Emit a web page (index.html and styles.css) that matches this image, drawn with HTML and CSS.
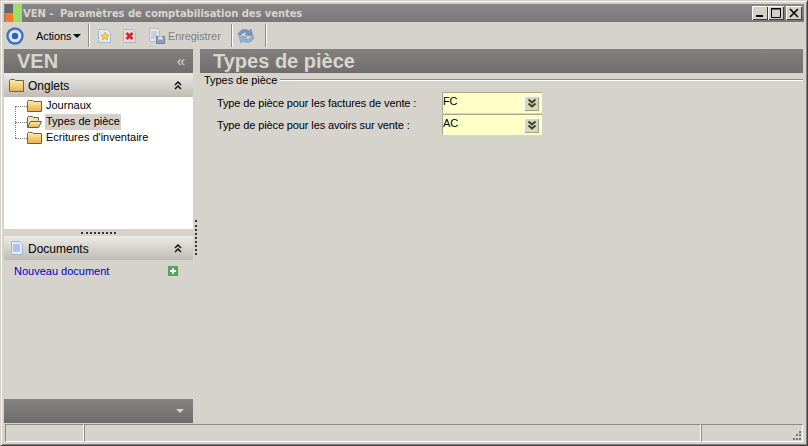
FILE: index.html
```html
<!DOCTYPE html>
<html lang="fr">
<head>
<meta charset="utf-8">
<title>VEN - Paramètres de comptabilisation des ventes</title>
<link rel="stylesheet" href="styles.css">
</head>
<body>
<div class="window">
  <header class="titlebar">
    <svg class="logo" width="18" height="18" viewBox="0 0 18 18"><defs><linearGradient id="fold" x1="0" y1="0" x2="0" y2="1"><stop offset="0" stop-color="#fbeeb4"/><stop offset="1" stop-color="#e9b143"/></linearGradient></defs><rect x="1" width="8" height="9" fill="#666"/><rect x="1" y="9" width="8" height="9" fill="#ee7b30"/><rect x="9" width="9" height="18" fill="#9fdc6a"/></svg>
    <span class="title">VEN -&nbsp; Paramètres de comptabilisation des ventes</span>
    <div class="winbtns">
      <span class="winbtn"><svg width="14" height="12" viewBox="0 0 14 12"><rect x="3" y="8" width="7" height="2" fill="#000"/></svg></span>
      <span class="winbtn"><svg width="14" height="12" viewBox="0 0 14 12"><path d="M2.500 1.500h9v9h-9z M2 2h10" fill="none" stroke="#000"/></svg></span>
      <span class="winbtn close"><svg width="14" height="12" viewBox="0 0 14 12"><path d="M3 2l8 8M11 2l-8 8" stroke="#000" stroke-width="1.600"/></svg></span>
    </div>
  </header>
  <nav class="toolbar">
    <svg class="tb-home" width="20" height="20" viewBox="0 0 20 20"><circle cx="10" cy="10" r="7.500" fill="#dfe6f3" stroke="#3f70c4" stroke-width="2.400"/><circle cx="10" cy="10" r="3.200" fill="#2f62bd"/></svg>
    <span class="actions">Actions<i class="caret"></i></span>
    <span class="sep"></span>
    <svg class="tb-icon" width="16" height="16" viewBox="0 0 16 16"><path d="M1.500 1.500h9l3 3v10h-12z" fill="#dfe9f8" stroke="#a9b8d3"/><path d="M8 4l1.300 2.700 2.900.4-2.100 2 .5 2.900L8 10.600 5.400 12l.5-2.900-2.100-2 2.900-.4z" fill="#f6cf3d" stroke="#c9981d" stroke-width=".5"/></svg>
    <svg class="tb-icon del" width="16" height="16" viewBox="0 0 16 16"><path d="M1.500 1.500h9l3 3v10h-12z" fill="#ecd8e0" stroke="#a9b8d3"/><path d="M4.500 5l6 6M10.500 5l-6 6" stroke="#d8282f" stroke-width="2.800"/></svg>
    <span class="save"><svg width="18" height="18" viewBox="0 0 18 18"><path d="M1.500 1.500h8l2 2v11h-10z" fill="#e4e7ec" stroke="#b6bcc6"/><path d="M3 5h6M3 7h6M3 9h6M3 11h6" stroke="#a9b6cb"/><rect x="8.500" y="9.500" width="8" height="7" fill="#8d9cb8" stroke="#76849e"/><rect x="10.500" y="9.500" width="4" height="3" fill="#e4e7ec"/></svg>Enregistrer</span>
    <span class="sep"></span>
    <svg class="tb-refresh" width="20" height="20" viewBox="0 0 20 20"><path d="M2 9c1-5 7-7 11-4l2-2 2 7-8-1 2-2c-2-1-5-.5-6 2z" fill="#6f95c4" stroke="#7a8ba3" stroke-width=".6"/><path d="M18 11c-1 5-7 7-11 4l-2 2-2-7 8 1-2 2c2 1 5 .5 6-2z" fill="#8fb4dc" stroke="#7a8ba3" stroke-width=".6"/></svg>
    <span class="sep"></span>
  </nav>
  <div class="content">
    <aside class="sidebar">
      <div class="banner side-banner"><span class="banner-text">VEN</span><span class="collapse">«</span></div>
      <div class="section-head">
        <svg width="16" height="15" viewBox="0 0 16 15"><path d="M.5 13.500V2.500l1-1h4l1 1h8v11z" fill="url(#fold)" stroke="#6e6240"/></svg>
        <span class="section-label">Onglets</span>
        <svg class="chev" width="10" height="10" viewBox="0 0 10 10"><path d="M2 5l3-3 3 3M2 9l3-3 3 3" fill="none" stroke="#000" stroke-width="1.400"/></svg>
      </div>
      <div class="tree">
        <div class="tree-line"></div>
        <div class="tree-item">
          <span class="dash"></span>
          <svg class="folder" width="15" height="12" viewBox="0 0 15 12"><path d="M.5 11.500V1.500l1-1h4l1 1h8v10z" fill="url(#fold)" stroke="#6e6240"/></svg>
          <span class="tree-label">Journaux</span>
        </div>
        <div class="tree-item">
          <span class="dash"></span>
          <svg class="folder" width="15" height="12" viewBox="0 0 15 12"><path d="M.5 11.500V1.500l1-1h4l1 1h5v3" fill="#f0e3b8" stroke="#6e6240"/><path d="M.5 11.500l3-6h11l-3 6z" fill="url(#fold)" stroke="#6e6240"/></svg>
          <span class="tree-label selected">Types de pièce</span>
        </div>
        <div class="tree-item">
          <span class="dash"></span>
          <svg class="folder" width="15" height="12" viewBox="0 0 15 12"><path d="M.5 11.500V1.500l1-1h4l1 1h8v10z" fill="url(#fold)" stroke="#6e6240"/></svg>
          <span class="tree-label">Ecritures d'inventaire</span>
        </div>
      </div>
      <div class="hsplit"><span class="dots-h"></span></div>
      <div class="section-head">
        <svg width="16" height="16" viewBox="0 0 16 16"><path d="M2.500 1.500h8l3 3v10h-11z" fill="#e6edfa" stroke="#9fb2d6"/><path d="M4 5h7M4 7h7M4 9h7M4 11h7" stroke="#7f9ad0"/></svg>
        <span class="section-label">Documents</span>
        <svg class="chev" width="10" height="10" viewBox="0 0 10 10"><path d="M2 5l3-3 3 3M2 9l3-3 3 3" fill="none" stroke="#000" stroke-width="1.400"/></svg>
      </div>
      <div class="doc-row">
        <a class="doc-link">Nouveau document</a>
        <svg width="10" height="10" viewBox="0 0 10 10"><rect width="10" height="10" fill="#4fa658"/><path d="M5 2v6M2 5h6" stroke="#fff" stroke-width="2"/></svg>
      </div>
      <div class="side-foot"><i class="foot-caret"></i></div>
    </aside>
    <div class="vsplit"><span class="dots-v"></span></div>
    <main class="main">
      <div class="banner main-banner"><span class="main-title">Types de pièce</span></div>
      <div class="legend"><span>Types de pièce</span><span class="rule"></span></div>
      <div class="form">
        <div class="form-row">
          <label class="form-label">Type de pièce pour les factures de vente :</label>
          <div class="combo"><span class="combo-val">FC</span><span class="combo-btn"><svg width="10" height="10" viewBox="0 0 10 10"><path d="M1.500 1.500L5 4.500l3.500-3M1.500 5.500L5 8.500l3.500-3" fill="none" stroke="#3a3a30" stroke-width="1.800"/></svg></span></div>
        </div>
        <div class="form-row">
          <label class="form-label">Type de pièce pour les avoirs sur vente :</label>
          <div class="combo"><span class="combo-val">AC</span><span class="combo-btn"><svg width="10" height="10" viewBox="0 0 10 10"><path d="M1.500 1.500L5 4.500l3.500-3M1.500 5.500L5 8.500l3.500-3" fill="none" stroke="#3a3a30" stroke-width="1.800"/></svg></span></div>
        </div>
      </div>
    </main>
  </div>
  <footer class="statusbar">
    <span class="cell c1"></span><span class="cell c2"></span><span class="cell c3"><svg class="grip" width="12" height="12" viewBox="0 0 12 12"><path d="M8 1h2v2H8zM5 4h2v2H5zM8 4h2v2H8zM2 8h2v2H2zM5 8h2v2H5zM8 8h2v2H8z" fill="#777"/></svg></span>
  </footer>
</div>
</body>
</html>
```
FILE: styles.css
```css
* { box-sizing: border-box; }
html, body { margin: 0; padding: 0; }
body { width: 808px; height: 446px; overflow: hidden; background: #d4d0c8; font-family: "Liberation Sans", Arial, sans-serif; font-size: 11px; color: #000; }
.window { width: 808px; height: 446px; display: flex; flex-direction: column; background: #d6d3cd; border: 1px solid #d4d0c8; border-right-color: #404040; border-bottom-color: #404040; padding: 3px 3px 2px 3px; box-shadow: inset 1px 1px 0 #fff, inset -1px -1px 0 #808080; }
.titlebar { height: 18px; flex: none; display: flex; align-items: center; background: linear-gradient(#8a8888, #787676); }
.logo { flex: none; }
.title { margin-left: 1px; color: #d8d5cd; font: bold 10px "DejaVu Sans", sans-serif; letter-spacing: -.07px; white-space: nowrap; }
.winbtns { margin-left: auto; margin-right: 2px; display: flex; }
.winbtn { width: 16px; height: 14px; background: #d4d0c8; box-shadow: inset 1px 1px 0 #fff, inset -1px -1px 0 #404040; display: flex; align-items: center; justify-content: center; }
.close { margin-left: 2px; }
.toolbar { height: 27px; flex: none; display: flex; align-items: center; }
.tb-home { margin-left: 1px; flex: none; }
.actions { margin-left: 11px; display: flex; align-items: center; width: 52px; letter-spacing: -.1px; }
.caret { margin-left: 2px; width: 0; height: 0; border: 4px solid transparent; border-top-color: #000; border-bottom: 0; }
.sep { width: 2px; height: 23px; background: #8f8d88; border-right: 1px solid #fff; flex: none; }
.tb-icon { margin-left: 7px; flex: none; }
.tb-icon.del { margin-left: 9px; }
.save { margin-left: 10px; width: 83px; display: flex; align-items: center; gap: 2px; color: #808080; letter-spacing: -.1px; }
.tb-refresh { margin-left: 3px; margin-right: 9px; flex: none; }
.content { flex: 1; min-height: 0; display: flex; }
.sidebar { width: 189px; flex: none; display: flex; flex-direction: column; }
.banner { height: 24px; flex: none; display: flex; align-items: center; background: linear-gradient(#828180, #6f6e6d); color: #d8d5cd; }
.banner-text { margin-left: 13px; font: bold 20px "Liberation Sans", sans-serif; }
.collapse { margin-left: auto; margin-right: 8px; font-size: 15px; line-height: 20px; }
.section-head { height: 24px; flex: none; display: flex; align-items: center; padding-left: 5px; background: linear-gradient(#ecebe6, #c0bcb4); }
.section-label { margin-left: 3px; padding-top: 1px; font-size: 12px; }
.chev { margin-left: auto; margin-right: 10px; }
.tree { position: relative; height: 132px; flex: none; background: #fff; padding-top: 1px; }
.tree-line { position: absolute; left: 11px; top: 9px; height: 32px; border-left: 1px dotted #808080; }
.tree-item { height: 16px; display: flex; align-items: center; padding-left: 11px; }
.dash { width: 12px; border-top: 1px dotted #808080; flex: none; }
.folder { flex: none; }
.tree-label { margin-left: 3px; padding: 0 1px; height: 16px; line-height: 15px; }
.selected { background: #d4d0c8; }
.hsplit { height: 7px; flex: none; display: flex; justify-content: center; align-items: center; background: #d6d3cd; }
.dots-h { width: 35px; border-top: 2px dotted #333; }
.doc-row { height: 22px; display: flex; align-items: center; padding: 0 15px 0 10px; justify-content: space-between; }
.doc-link { color: #0000c0; }
.side-foot { margin-top: auto; height: 24px; flex: none; display: flex; align-items: center; justify-content: flex-end; padding-right: 9px; background: linear-gradient(#858483, #6d6c6b); }
.foot-caret { width: 0; height: 0; border: 4px solid transparent; border-top-color: #d8d5cd; border-bottom: 0; }
.vsplit { width: 7px; flex: none; position: relative; }
.dots-v { position: absolute; left: 2px; top: 171px; height: 35px; border-left: 2px dotted #333; }
.main { flex: 1; min-width: 0; display: flex; flex-direction: column; margin-right: 1px; }
.main-banner { height: 24px; }
.main-title { margin-left: 13px; font: bold 20px "Liberation Sans", sans-serif; }
.legend { display: flex; align-items: center; height: 14px; padding-left: 4px; letter-spacing: -.05px; }
.rule { flex: 1; height: 2px; margin-left: 3px; background: #8f8d88; border-bottom: 1px solid #fff; }
.form { padding: 5px 0 0 17px; display: flex; flex-direction: column; gap: 1px; letter-spacing: -.12px; }
.form-row { display: flex; align-items: center; height: 21px; }
.form-label { width: 225px; }
.combo { width: 100px; height: 21px; display: flex; align-items: center; background: #ffffc8; border-top: 1px solid #a8a890; border-left: 1px solid #a8a890; padding-right: 3px; }
.combo-val { line-height: 14px; align-self: flex-start; margin-top: 1px; }
.combo-btn { margin-left: auto; width: 15px; height: 15px; display: flex; align-items: center; justify-content: center; background: #d8d8b8; box-shadow: inset 1px 1px 0 #fff, inset -1px -1px 0 #a0a090; }
.statusbar { height: 20px; flex: none; display: flex; margin: 0 1px 0 1px; padding-top: 1px; }
.cell { border: 1px solid; border-color: #8a8a86 #fff #fff #8a8a86; height: 18px; position: relative; }
.c1 { width: 79px; }
.c2 { flex: 1; }
.c3 { width: 102px; }
.grip { position: absolute; right: -1px; bottom: -1px; }
```
